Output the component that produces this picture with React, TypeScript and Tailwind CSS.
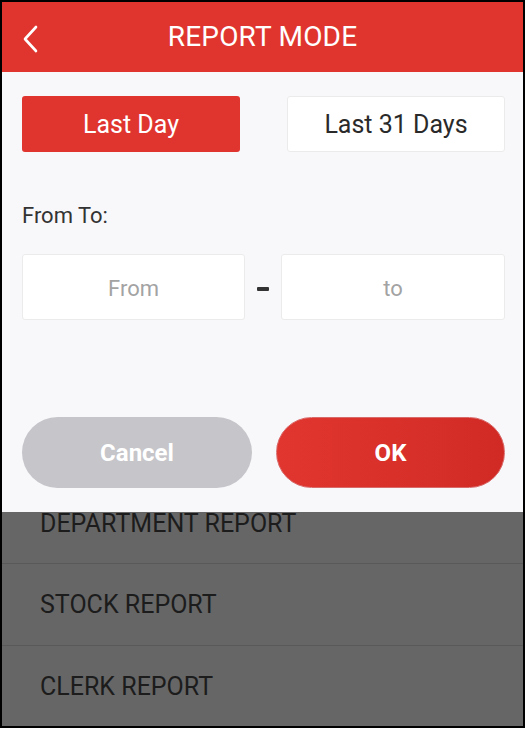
import React from "react";

export default function App() {
  return (
    <div className="w-[527px] h-[729px] bg-white" style={{ fontFamily: "Roboto, 'Liberation Sans', sans-serif" }}>
      <div className="w-[525px] h-[728px] border-2 border-black flex flex-col overflow-hidden">
        {/* Header */}
        <div className="h-[70px] bg-[#e0352f] relative flex items-center justify-center shrink-0">
          <svg className="absolute left-[18px] top-[22px]" width="22" height="30" viewBox="0 0 22 30" fill="none">
            <path d="M16 3 L5 15 L16 27" stroke="white" strokeWidth="2.6" strokeLinecap="round" strokeLinejoin="round" />
          </svg>
          <span className="text-white text-[28px] leading-none tracking-[0.2px]">REPORT MODE</span>
        </div>

        {/* Dialog body */}
        <div className="bg-[#f8f7fa] pl-[20px] pr-[18px] pt-[24px] pb-[24px] shrink-0">
          <div className="flex justify-between">
            <div className="w-[218px] h-[56px] rounded-[3px] bg-[#e0352f] flex items-center justify-center text-white text-[25px] pt-[2px]">
              Last Day
            </div>
            <div className="w-[218px] h-[56px] rounded-[3px] bg-white border border-[#ebebeb] flex items-center justify-center text-[#2a2a2a] text-[25px] pt-[2px]">
              Last 31 Days
            </div>
          </div>

          <div className="mt-[52px] text-[22px] leading-[24px] text-[#333]">From To:</div>

          <div className="mt-[26px] flex items-center">
            <div className="w-[223px] h-[66px] rounded-[3px] bg-white border border-[#ebebeb] flex items-center justify-center text-[22px] text-[#a3a3a3] pt-[2px]">
              From
            </div>
            <div className="flex-1 flex justify-center">
              <div className="w-[12px] h-[4px] bg-[#333] rounded-[1px] mt-[4px]" />
            </div>
            <div className="w-[224px] h-[66px] rounded-[3px] bg-white border border-[#ebebeb] flex items-center justify-center text-[22px] text-[#a3a3a3] pt-[2px]">
              to
            </div>
          </div>

          <div className="mt-[97px] flex justify-between">
            <div className="w-[230px] h-[71px] rounded-full bg-[#c6c5c9] flex items-center justify-center text-white text-[24px] font-bold">
              Cancel
            </div>
            <div className="w-[229px] h-[71px] rounded-full bg-gradient-to-r from-[#e1362f] to-[#d12a25] border border-[#d96a6a] flex items-center justify-center text-white text-[24px] font-bold">
              OK
            </div>
          </div>
        </div>

        {/* Dimmed list */}
        <div className="flex-1 bg-[#666666] text-[#1c1c1c] text-[25px]">
          <div className="h-[51px] pl-[38px] leading-[24px] pt-0">DEPARTMENT REPORT</div>
          <div className="h-[82px] pl-[38px] border-t border-[#595959] flex items-center">STOCK REPORT</div>
          <div className="h-[82px] pl-[38px] border-t border-[#595959] flex items-center">CLERK REPORT</div>
        </div>
      </div>
    </div>
  );
}
